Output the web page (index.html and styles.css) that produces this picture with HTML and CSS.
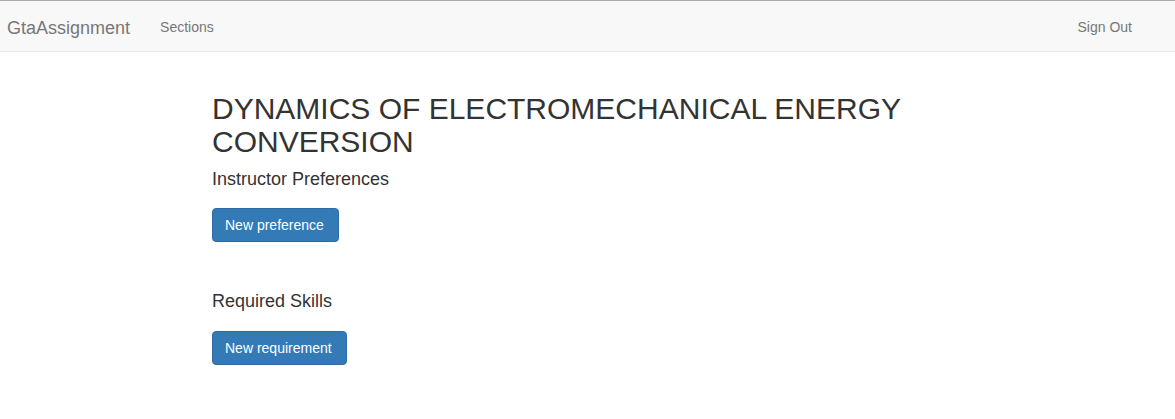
FILE: index.html
```html
<!DOCTYPE html>
<html lang="en">
<head>
<meta charset="utf-8">
<title>GtaAssignment</title>
<link rel="stylesheet" href="styles.css">
</head>
<body>
<nav class="navbar">
  <div class="navbar-inner">
    <a class="brand" href="#">GtaAssignment</a>
    <ul class="nav">
      <li><a class="nav-link" href="#">Sections</a></li>
    </ul>
    <ul class="nav nav-right">
      <li><a class="nav-link" href="#">Sign Out</a></li>
    </ul>
  </div>
</nav>
<main class="content">
  <h2 class="title">DYNAMICS OF ELECTROMECHANICAL ENERGY CONVERSION</h2>
  <h4 class="subtitle">Instructor Preferences</h4>
  <div class="actions"><a class="btn" href="#">New preference</a></div>
  <h4 class="subtitle subtitle-spaced">Required Skills</h4>
  <div class="actions"><a class="btn" href="#">New requirement</a></div>
</main>
</body>
</html>
```
FILE: styles.css
```css
* { box-sizing: border-box; }
html, body { margin: 0; padding: 0; }
body {
  font-family: "Liberation Sans", Arial, Helvetica, sans-serif;
  font-size: 14px;
  line-height: 1.42857143;
  color: #333;
  background: #fff;
}
a { text-decoration: none; }

.navbar {
  background: #f8f8f8;
  border-top: 1px solid #a9a9a9;
  border-bottom: 1px solid #e7e7e7;
  margin-bottom: 20px;
}
.navbar-inner {
  display: flex;
  align-items: stretch;
  height: 50px;
  padding: 0 28px 0 0;
}
.brand {
  display: block;
  padding: 17px 15px 13px 7px;
  font-size: 18px;
  line-height: 20px;
  color: #777;
}
.nav {
  display: flex;
  list-style: none;
  margin: 0;
  padding: 0;
}
.nav-right { margin-left: auto; }
.nav-link {
  display: block;
  padding: 16px 15px 14px;
  line-height: 20px;
  color: #777;
}

.content {
  width: 751px;
  margin: 0 auto;
  display: flow-root;
}
.title {
  font-size: 30px;
  font-weight: 500;
  line-height: 1.1;
  margin: 20px 0 10px;
}
.subtitle {
  font-size: 18px;
  font-weight: 500;
  line-height: 1.1;
  margin: 12px 0 18px;
}
.subtitle-spaced {
  margin-top: 50px;
  margin-bottom: 19px;
}
.actions { display: flex; }
.btn {
  display: inline-block;
  padding: 6px 14px 6px 12px;
  font-size: 14px;
  line-height: 20px;
  color: #fff;
  background: #337ab7;
  border: 1px solid #2e6da4;
  border-radius: 4px;
  white-space: nowrap;
}
```
